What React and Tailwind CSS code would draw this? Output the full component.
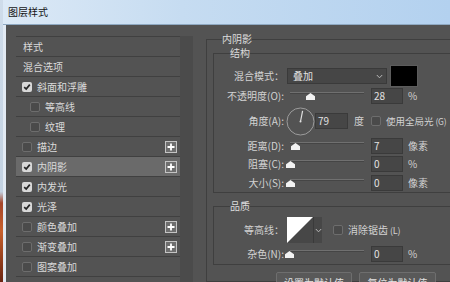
import React from 'react';

const layers = [
    { label: '样式', plain: true },
    { label: '混合选项', plain: true },
    { label: '斜面和浮雕', checked: true },
    { label: '等高线', indent: true },
    { label: '纹理', indent: true },
    { label: '描边', plus: true },
    { label: '内阴影', checked: true, plus: true, active: true },
    { label: '内发光', checked: true },
    { label: '光泽', checked: true },
    { label: '颜色叠加', plus: true },
    { label: '渐变叠加', plus: true },
    { label: '图案叠加' },
    { label: '外发光' },
];

const Check = ({ checked, className = '' }) =>
    checked ? (
        <span className={`w-[10px] h-[10px] shrink-0 rounded-[2px] bg-[#d8d8d8] flex items-center justify-center ${className}`}>
            <svg width="8" height="8" viewBox="0 0 8 8">
                <path d="M1.2 4.1 L3.2 6 L6.8 1.6" stroke="#262626" strokeWidth="1.7" fill="none" />
            </svg>
        </span>
    ) : (
        <span className={`block w-[10px] h-[10px] shrink-0 rounded-[2px] bg-[#4a4a4a] border border-[#6d6d6d] ${className}`} />
    );

const PlusBox = () => (
    <span className="ml-auto mr-[3px] w-[12px] h-[12px] border border-[#c4c4c4] bg-[#6e6e6e] flex items-center justify-center">
        <svg width="8" height="8" viewBox="0 0 8 8">
            <path d="M4 0.5V7.5M0.5 4H7.5" stroke="#ffffff" strokeWidth="1.8" />
        </svg>
    </span>
);

const LayerRow = ({ item }) => (
    <div
        className={`h-[20px] shrink-0 flex items-center border-t border-[#404040] ${
            item.active ? 'bg-[#6a6a6a]' : ''
        } ${item.plain ? 'pl-[7px]' : item.indent ? 'pl-[14px]' : 'pl-[6px]'}`}
    >
        {!item.plain && <Check checked={item.checked} />}
        <span className={`${item.plain ? '' : 'ml-[5px]'} text-[#dadada]`}>{item.label}</span>
        {item.plus && <PlusBox />}
    </div>
);

const Label = ({ children }) => (
    <span className="w-[70px] shrink-0 text-right text-[#d2d2d2]">{children}</span>
);

const Field = ({ value, className = '' }) => (
    <span className={`w-[32px] h-[16px] shrink-0 bg-[#464646] border border-[#3a3a3a] pl-[2px] leading-[14px] text-[#e2e2e2] ${className}`}>
        {value}
    </span>
);

const Slider = ({ thumb }) => (
    <span className="relative ml-[6px] w-[74px] h-[16px] shrink-0">
        <span className="absolute left-0 right-0 top-[4px] h-[2px] bg-[#707070] border-b border-[#454545]" />
        <svg className="absolute top-[5px]" style={{ left: thumb }} width="9" height="7" viewBox="0 0 9 7">
            <path d="M0 7V3.2L4.5 0L9 3.2V7Z" fill="#f2f2f2" />
        </svg>
    </span>
);

const SliderRow = ({ label, thumb, value, unit, className = '' }) => (
    <div className={`h-[16px] flex items-center ${className}`}>
        <Label>{label}</Label>
        <Slider thumb={thumb} />
        <Field value={value} className="ml-[7px]" />
        <span className="ml-[5px] text-[#d2d2d2]">{unit}</span>
    </div>
);

const Chevron = () => (
    <svg width="7" height="5" viewBox="0 0 7 5">
        <path d="M0.8 1 L3.5 3.8 L6.2 1" stroke="#b8b8b8" strokeWidth="1" fill="none" />
    </svg>
);

export default function App() {
    return (
        <div className="w-[450px] h-[282px] overflow-hidden flex text-[10px] font-['Noto_Sans_CJK_SC',sans-serif] leading-[14px]">
            {/* desktop behind the window */}
            <div className="w-[3px] shrink-0 bg-[linear-gradient(to_bottom,#cfdcea_0%,#c3d2e2_68%,#a5452a_72%,#c8602c_82%,#6a2412_100%)]" />

            <div className="flex-1 flex flex-col min-w-0">
                {/* title bar */}
                <div className="h-[25px] shrink-0 flex items-center pl-[5px] bg-[linear-gradient(to_right,#dce9f6,#c6dcf1_40%,#b3d1ef)] border-b border-[#8fa9c2]">
                    <span className="text-[#151515]">图层样式</span>
                </div>

                {/* body */}
                <div className="flex-1 flex bg-[#535353] border-l-[3px] border-[#e2eaf3] min-h-0">
                    {/* style list */}
                    <div className="ml-[10px] mt-[11px] flex shrink-0">
                        <div className="w-[164px] flex flex-col">
                            {layers.map((item) => (
                                <LayerRow key={item.label} item={item} />
                            ))}
                        </div>
                        <div className="w-[13px] bg-[#4b4b4b]" />
                    </div>

                    {/* effect settings */}
                    <fieldset className="ml-[13px] mt-[7px] w-[270px] shrink-0 border border-[#3f3f3f] pl-[6px]">
                        <legend className="ml-[9px] text-[#dcdcdc]">内阴影</legend>

                        <fieldset className="border border-[#3f3f3f] pb-[1px]">
                            <legend className="ml-[16px] text-[#dcdcdc]">结构</legend>

                            <div className="mt-[5px] h-[22px] flex items-center">
                                <Label>混合模式：</Label>
                                <span className="ml-[3px] w-[100px] h-[16px] shrink-0 bg-[#464646] border border-[#3a3a3a] flex items-center pl-[5px] pr-[3px] text-[#e2e2e2]">
                                    叠加
                                    <span className="ml-auto">
                                        <Chevron />
                                    </span>
                                </span>
                                <span className="ml-[3px] w-[28px] h-[22px] shrink-0 bg-black border border-[#5c5c5c]" />
                            </div>

                            <SliderRow label="不透明度(O):" thumb={16} value="28" unit="%" className="mt-[1px]" />

                            <div className="mt-[2px] h-[30px] flex items-center">
                                <Label>角度(A):</Label>
                                <svg className="ml-[2px] shrink-0" width="29" height="29" viewBox="0 0 29 29">
                                    <circle cx="14.5" cy="14.5" r="13.5" stroke="#9c9c9c" strokeWidth="1" fill="none" />
                                    <path d="M14.5 14.5 L16.6 3.8" stroke="#e0e0e0" strokeWidth="1.2" />
                                    <circle cx="14.5" cy="14.5" r="1" fill="#e0e0e0" />
                                </svg>
                                <Field value="79" className="w-[33px]" />
                                <span className="ml-[6px] text-[#d2d2d2]">度</span>
                                <Check className="ml-[7px]" />
                                <span className="ml-[5px] whitespace-nowrap text-[#d2d2d2] text-[9.5px]">
                                    使用全局光<span className="ml-[2px] text-[8.5px] tracking-[-0.3px]">(G)</span>
                                </span>
                            </div>

                            <SliderRow label="距离(D):" thumb={1} value="7" unit="像素" className="mt-[2px]" />
                            <SliderRow label="阻塞(C):" thumb={-4} value="0" unit="%" className="mt-[2px]" />
                            <SliderRow label="大小(S):" thumb={-4} value="0" unit="像素" className="mt-[3px]" />
                        </fieldset>

                        <fieldset className="mt-[6px] border border-[#3f3f3f] pb-[2px]">
                            <legend className="ml-[16px] text-[#dcdcdc]">品质</legend>

                            <div className="mt-[4px] h-[26px] flex items-center">
                                <Label>等高线：</Label>
                                <svg className="ml-[3px] shrink-0" width="26" height="26" viewBox="0 0 26 26">
                                    <rect x="0" y="0" width="26" height="26" fill="#474747" />
                                    <path d="M0 0H26L0 26Z" fill="#ffffff" />
                                </svg>
                                <span className="w-[9px] h-[26px] shrink-0 bg-[#474747] border-l border-[#3a3a3a] flex items-center justify-center">
                                    <Chevron />
                                </span>
                                <Check className="ml-[11px]" />
                                <span className="ml-[5px] whitespace-nowrap text-[#d2d2d2]">
                                    消除锯齿<span className="ml-[2px] text-[9px] tracking-[-0.2px]">(L)</span>
                                </span>
                            </div>

                            <SliderRow label="杂色(N):" thumb={-5} value="0" unit="%" className="mt-[3px]" />
                        </fieldset>

                        <div className="mt-[7px] flex">
                            <button className="ml-[63px] w-[76px] h-[19px] rounded-[2px] bg-[#595959] border border-[#6e6e6e] text-[#e4e4e4] leading-[17px] pt-[1px]">
                                设置为默认值
                            </button>
                            <button className="ml-[7px] w-[77px] h-[19px] rounded-[2px] bg-[#595959] border border-[#6e6e6e] text-[#e4e4e4] leading-[17px] pt-[1px]">
                                复位为默认值
                            </button>
                        </div>
                    </fieldset>
                </div>
            </div>
        </div>
    );
}
